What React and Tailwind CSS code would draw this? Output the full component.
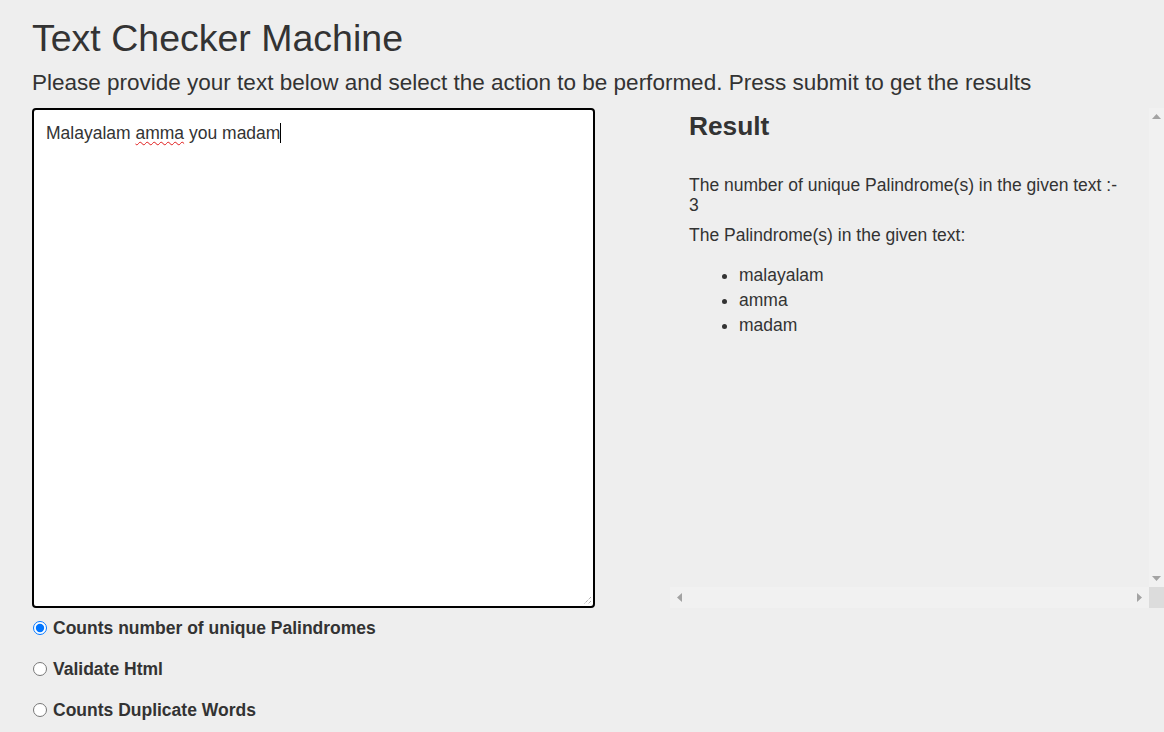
import React from "react";

const options = [
  { id: "pal", label: "Counts number of unique Palindromes", checked: true },
  { id: "html", label: "Validate Html", checked: false },
  { id: "dup", label: "Counts Duplicate Words", checked: false },
];

const palindromes = ["malayalam", "amma", "madam"];

export default function App() {
  return (
    <div className="min-h-[732px] w-[1164px] overflow-hidden bg-[#eeeeee] pl-8 text-[#333333] font-['Liberation_Sans',Arial,sans-serif]">
      <h1 className="pt-[14px] text-[37.5px] leading-[48px]">Text Checker Machine</h1>
      <p className="mt-[6px] text-[22.5px] leading-[30px]">
        Please provide your text below and select the action to be performed. Press submit to get the results
      </p>

      <div className="mt-[10px] flex">
        {/* left: input + actions */}
        <div className="w-[563px]">
          <div className="relative h-[500px] rounded-[4px] border-2 border-black bg-white px-3 pt-[9px] text-[17.5px] leading-[22px]">
            <span>Malayalam </span>
            <span className="underline decoration-wavy decoration-[#e01b1b] decoration-1 underline-offset-2">amma</span>
            <span> you madam</span>
            <span className="inline-block h-[20px] w-px translate-y-[4px] bg-black"></span>
            <svg className="absolute bottom-[1px] right-[1px]" width="10" height="10" viewBox="0 0 10 10">
              <path d="M9 2 L2 9 M9 6 L6 9" stroke="#8a8a8a" strokeWidth="1" strokeDasharray="1 1" />
            </svg>
          </div>

          <div className="mt-[11px] flex flex-col gap-[23px]">
            {options.map((o) => (
              <label key={o.id} className="flex h-[18px] items-center gap-[6px] text-[17.5px] font-bold leading-[18px]">
                <input type="radio" name="action" defaultChecked={o.checked} className="m-0 ml-px h-[14px] w-[14px]" />
                {o.label}
              </label>
            ))}
          </div>
        </div>

        {/* right: result panel with scrollbars */}
        <div className="ml-[75px] flex h-[500px] flex-1 flex-col">
          <div className="flex flex-1">
            <div className="flex-1 pl-[19px] pt-[4px]">
              <h3 className="text-[26.3px] font-bold leading-[28px]">Result</h3>
              <p className="mt-[35px] text-[17.5px] leading-[20px]">
                The number of unique Palindrome(s) in the given text :-
                <br />3
              </p>
              <p className="mt-[10px] text-[17.5px] leading-[20px]">The Palindrome(s) in the given text:</p>
              <ul className="mt-[18px] list-disc pl-[50px] text-[17.5px] leading-[25px]">
                {palindromes.map((w) => (
                  <li key={w}>{w}</li>
                ))}
              </ul>
            </div>
            <div className="flex w-[15px] flex-col items-center justify-between bg-[#f1f1f1] py-[6px]">
              <svg width="9" height="5" viewBox="0 0 9 5"><path d="M4.5 0 L9 5 L0 5 Z" fill="#a3a3a3" /></svg>
              <svg width="9" height="5" viewBox="0 0 9 5"><path d="M0 0 L9 0 L4.5 5 Z" fill="#a3a3a3" /></svg>
            </div>
          </div>
          <div className="flex h-[21px]">
            <div className="flex flex-1 items-center justify-between bg-[#f1f1f1] px-[7px]">
              <svg width="5" height="9" viewBox="0 0 5 9"><path d="M5 0 L5 9 L0 4.5 Z" fill="#a3a3a3" /></svg>
              <svg width="5" height="9" viewBox="0 0 5 9"><path d="M0 0 L5 4.5 L0 9 Z" fill="#a3a3a3" /></svg>
            </div>
            <div className="w-[15px] bg-[#dcdcdc]"></div>
          </div>
        </div>
      </div>
    </div>
  );
}
